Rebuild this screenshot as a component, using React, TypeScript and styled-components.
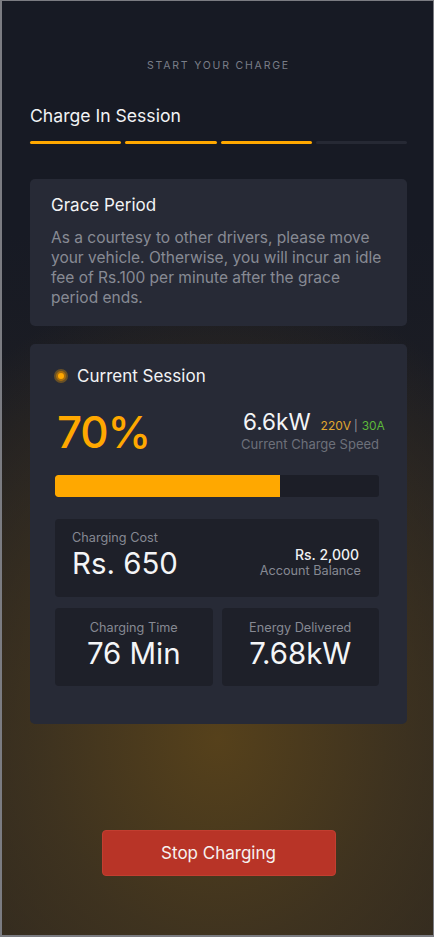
import React from "react";
import styled, { createGlobalStyle } from "styled-components";

const Global = createGlobalStyle`
  * { box-sizing: border-box; }
  html, body { margin: 0; padding: 0; background: #171a24; }
  body { font-family: Inter, "Noto Sans", sans-serif; -webkit-font-smoothing: antialiased; }
`;

const Screen = styled.div`
  width: 434px;
  height: 937px;
  border: 1px solid #7b7c82;
  border-left-width: 2px;
  border-bottom-width: 2px;
  padding: 0 26px 0 28px;
  display: flex;
  flex-direction: column;
  overflow: hidden;
  background:
    radial-gradient(ellipse 390px 460px at 50% 79%, rgba(86, 65, 27, 1) 0%, rgba(66, 53, 31, 0.85) 45%, rgba(23, 26, 36, 0) 100%),
    linear-gradient(180deg, #171a24 0%, #171a24 25%, #2a2520 100%);
`;

const Eyebrow = styled.div`
  margin-top: 58px;
  text-align: center;
  font-size: 10.5px;
  line-height: 14px;
  letter-spacing: 1.8px;
  color: #7a7e88;
`;

const Title = styled.div`
  margin-top: 32px;
  font-size: 17.6px;
  line-height: 22px;
  color: #f2f3f5;
`;

const Steps = styled.div`
  margin-top: 14px;
  display: grid;
  grid-template-columns: repeat(4, 1fr);
  gap: 4px;
`;

const Step = styled.div<{ $active: boolean }>`
  height: 3px;
  border-radius: 2px;
  background: ${(p) => (p.$active ? "#ffa800" : "#262934")};
`;

const Card = styled.div`
  background: #272a36;
  border-radius: 5px;
`;

const GraceCard = styled(Card)`
  margin-top: 35px;
  padding: 15px 22px 18px 21px;
`;

const CardTitle = styled.div`
  font-size: 17px;
  line-height: 22px;
  color: #f2f3f5;
`;

const Body = styled.p`
  margin: 12px 0 0;
  font-size: 15.5px;
  line-height: 20px;
  color: #878a94;
`;

const SessionCard = styled(Card)`
  margin-top: 18px;
  padding: 21px 28px 38px 25px;
  display: flex;
  flex-direction: column;
`;

const SessionHead = styled.div`
  display: flex;
  align-items: center;
  gap: 11px;
`;

const Dot = styled.span`
  width: 10px;
  height: 10px;
  margin-left: 1px;
  border-radius: 50%;
  background: #ffa800;
  box-shadow: 0 0 0 2px rgba(255, 168, 0, 0.3);
  border: 2px solid #a76d0e;
`;

const StatRow = styled.div`
  margin-top: 21px;
  display: flex;
  justify-content: space-between;
  align-items: flex-start;
`;

const Percent = styled.div`
  font-size: 44px;
  line-height: 48px;
  font-weight: 500;
  letter-spacing: -1.2px;
  color: #ffa800;
  margin-left: 2px;
`;

const Speed = styled.div`
  display: flex;
  flex-direction: column;
  align-items: flex-end;
  margin-top: 1px;
`;

const SpeedLine = styled.div`
  display: flex;
  align-items: baseline;
  width: 136px;
`;

const SpeedValue = styled.span`
  font-size: 22.5px;
  line-height: 26px;
  color: #f4f5f7;
  margin-right: 10px;
`;

const Small = styled.span<{ $color: string }>`
  font-size: 12px;
  color: ${(p) => p.$color};
`;

const Sep = styled.span`
  font-size: 11px;
  color: #9a9ca3;
  margin: 0 4px 0 3px;
`;

const Caption = styled.div`
  font-size: 13px;
  line-height: 18px;
  color: #6d707a;
`;

const Bar = styled.div`
  margin-top: 19px;
  height: 22px;
  border-radius: 3px;
  background: #1c1e27;
  overflow: hidden;
`;

const BarFill = styled.div`
  height: 100%;
  background: #ffa800;
  border-radius: 3px 0 0 3px;
`;

const Inner = styled.div`
  background: #1e2029;
  border-radius: 4px;
  height: 78px;
`;

const CostCard = styled(Inner)`
  margin-top: 22px;
  padding: 11px 18px 0 17px;
  display: flex;
  justify-content: space-between;
  align-items: flex-start;
`;

const Label = styled.div`
  font-size: 12.7px;
  line-height: 16px;
  color: #868993;
`;

const BigValue = styled.div`
  font-size: 29.4px;
  line-height: 36px;
  color: #f4f5f7;
`;

const Balance = styled.div`
  margin-top: 16px;
  display: flex;
  flex-direction: column;
  align-items: flex-end;
`;

const BalanceValue = styled.div`
  font-size: 14px;
  line-height: 17px;
  font-weight: 500;
  color: #f0f1f3;
  margin-right: 2px;
`;

const Grid = styled.div`
  margin-top: 11px;
  display: grid;
  grid-template-columns: 1fr 1fr;
  gap: 9px;
`;

const Tile = styled(Inner)`
  padding-top: 12px;
  display: flex;
  flex-direction: column;
  align-items: center;
`;

const StopButton = styled.button`
  margin: 106px auto 0;
  width: 234px;
  height: 46px;
  border: 1px solid #c23e30;
  border-radius: 4px;
  background: #b83427;
  color: #f6f1f0;
  font-family: Inter, "Noto Sans", sans-serif;
  font-size: 17px;
  cursor: pointer;
`;

export default function App() {
  const progress = 69.5;
  return (
    <>
      <Global />
      <Screen>
        <Eyebrow>START YOUR CHARGE</Eyebrow>
        <Title>Charge In Session</Title>
        <Steps>
          {[true, true, true, false].map((a, i) => (
            <Step key={i} $active={a} />
          ))}
        </Steps>
        <GraceCard>
          <CardTitle>Grace Period</CardTitle>
          <Body>
            As a courtesy to other drivers, please move your vehicle. Otherwise, you will incur an idle fee of
            Rs.100 per minute after the grace period ends.
          </Body>
        </GraceCard>
        <SessionCard>
          <SessionHead>
            <Dot />
            <CardTitle>Current Session</CardTitle>
          </SessionHead>
          <StatRow>
            <Percent>70%</Percent>
            <Speed>
              <SpeedLine>
                <SpeedValue>6.6kW</SpeedValue>
                <Small $color="#e0a72e">220V</Small>
                <Sep>|</Sep>
                <Small $color="#5cb83a">30A</Small>
              </SpeedLine>
              <Caption>Current Charge Speed</Caption>
            </Speed>
          </StatRow>
          <Bar>
            <BarFill style={{ width: `${progress}%` }} />
          </Bar>
          <CostCard>
            <div>
              <Label>Charging Cost</Label>
              <BigValue>Rs. 650</BigValue>
            </div>
            <Balance>
              <BalanceValue>Rs. 2,000</BalanceValue>
              <Label>Account Balance</Label>
            </Balance>
          </CostCard>
          <Grid>
            <Tile>
              <Label>Charging Time</Label>
              <BigValue>76 Min</BigValue>
            </Tile>
            <Tile>
              <Label>Energy Delivered</Label>
              <BigValue>7.68kW</BigValue>
            </Tile>
          </Grid>
        </SessionCard>
        <StopButton>Stop Charging</StopButton>
      </Screen>
    </>
  );
}
